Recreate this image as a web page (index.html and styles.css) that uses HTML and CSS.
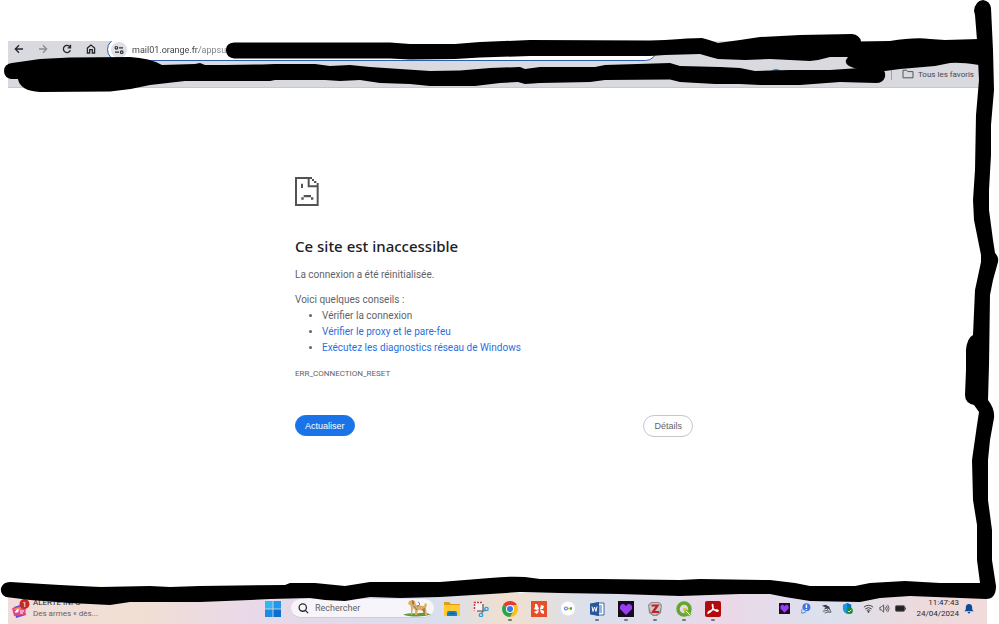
FILE: index.html
```html
<!DOCTYPE html>
<html lang="fr">
<head>
    <meta charset="UTF-8">
    <meta name="viewport" content="width=device-width, initial-scale=1.0">
    <title>mail01.orange.fr</title>
<link rel="stylesheet" href="styles.css">
</head>
<body>
    <div class="desktop">
        <header class="browser">
            <div class="toolbar">
                <nav class="nav">
                    <button class="icon-btn" aria-label="Retour"><svg viewBox="0 0 10 10"><path d="M9 5H1.5M5 1.3L1.3 5L5 8.7"/></svg></button>
                    <button class="icon-btn off" aria-label="Avancer"><svg viewBox="0 0 10 10"><path d="M1 5h7.5M5 1.3L8.7 5L5 8.7"/></svg></button>
                    <button class="icon-btn" aria-label="Recharger"><svg viewBox="0 0 10 10"><path d="M8.4 6.2A3.6 3.6 0 1 1 8 3M8.5 .8v3H5.6"/></svg></button>
                    <button class="icon-btn" aria-label="Accueil"><svg viewBox="0 0 10 10"><path d="M1.4 4L5 1.1L8.6 4v5H6.3V5.7H3.7V9H1.4z"/></svg></button>
                </nav>
                <div class="omnibox">
                    <button class="chip" aria-label="Informations du site"><svg viewBox="0 0 10 10"><circle cx="2.4" cy="2.8" r="1.3"/><path d="M5 2.8h4M1 7.2h4"/><circle cx="7.7" cy="7.2" r="1.3"/></svg></button>
                    <input class="url" type="text" aria-label="Adresse" value="mail01.orange.fr/appsu">
                </div>
            </div>
            <div class="bookmarks">
                <button class="all-bookmarks">
                    <svg viewBox="0 0 12 10"><path d="M1 1.2h3.6l1.2 1.4H11v6.2H1z"/></svg>
                    Tous les favoris
                </button>
            </div>
        </header>

        <main class="error">
            <svg class="sad" viewBox="0 0 72 87">
                <path d="M0 0h51v6h6v6h7v6h7v69H0zM6 6v75h59V31H38V6zM44 6v19h21v-7h-8v-6h-6V6z" fill-rule="evenodd"/>
                <path d="M18 20h6v13h-6zM26 54h22v7H26zM19 61h7v7h-7zM48 61h7v7h-7z"/>
            </svg>
            <h1>Ce site est inaccessible</h1>
            <p>La connexion a été réinitialisée.</p>
            <div class="tips">
                <p>Voici quelques conseils :</p>
                <ul>
                    <li>Vérifier la connexion</li>
                    <li><a href="#proxy">Vérifier le proxy et le pare-feu</a></li>
                    <li><a href="#diagnostics">Exécutez les diagnostics réseau de Windows</a></li>
                </ul>
            </div>
            <div class="code">ERR_CONNECTION_RESET</div>
            <div class="actions">
                <button class="reload">Actualiser</button>
                <button class="details">Détails</button>
            </div>
        </main>

        <footer class="taskbar">
            <div class="widget">
                <svg class="news" viewBox="0 0 18 20">
                    <path d="M2 8l9-3 3 11-10 3z" fill="#5b4be0"/>
                    <path d="M0 9l11-2 3 1-1 8-11 1z" fill="#e0468a"/>
                    <path d="M1 10l8-2-1 4z" fill="#ff8b5a"/>
                    <path d="M3 13l3-3v3zM8 12h4M8 14h3" fill="#fff" stroke="#fff"/>
                    <circle cx="12.5" cy="5" r="5" fill="#c9281f"/>
                    <text x="12.5" y="8" class="badge">1</text>
                </svg>
                <div class="headline">
                    <div class="alert">ALERTE INFO</div>
                    <div>Des armes « dès...</div>
                </div>
            </div>

            <button class="app start" aria-label="Démarrer">
                <svg viewBox="0 0 16 16"><path d="M0 0h7.6v7.6H0z" fill="#35b5f2"/><path d="M8.4 0H16v7.6H8.4z" fill="#2299e8"/><path d="M0 8.4h7.6V16H0z" fill="#1d8be0"/><path d="M8.4 8.4H16V16H8.4z" fill="#0f6fcc"/></svg>
            </button>
            <label class="search">
                <svg class="loupe" viewBox="0 0 12 12"><circle cx="5.2" cy="5" r="4"/><path d="M8 8l3 3"/></svg>
                <input type="text" placeholder="Rechercher" aria-label="Rechercher">
                <svg class="dog" viewBox="0 0 30 18">
                    <path d="M1 15.500q8-2 14-1 8-2 14 1-6 2-14 2-9 0-14-2z" fill="#5d9a3c"/>
                    <path d="M7 2l3-1 3 1 1 4 8 1 1-3 2 1-1 4 1 7h-2l-1-4-6-1-1 5h-2v-5l-2-2-1 7H9V8L8 6 6 5z" fill="#dcae63"/>
                    <path d="M10 1l2 1v4l-2-1zM20 10l2 5h1V9z" fill="#ad7935"/>
                    <path d="M12 7l3 4M16 3a2 2 0 1 1-1 4" fill="none" stroke="#5c6780" stroke-width=".8"/>
                </svg>
            </label>
            <div class="apps">
                <button class="app" aria-label="Explorateur"><svg viewBox="0 0 16 16"><path d="M0 1h5l2 2h9v6H0z" fill="#e79a14"/><path d="M0 4h16v11H0z" fill="#ffc933"/><path d="M3 15v-3q0-2 2-2h6q2 0 2 2v3z" fill="#1580c5"/><path d="M5 12h6v1H5z" fill="#075e9c"/></svg></button>
                <button class="app" aria-label="Capture"><svg viewBox="0 0 16 16"><path d="M1 1h9v9H1z" fill="#f5f0f2"/><path d="M9 1.500H1.500v8" fill="none" stroke="#cf3d32" stroke-width="1.500" stroke-dasharray="2 1"/><path d="M4 10h6l3-1M10 3v7l-1 2" fill="none" stroke="#777b82" stroke-width="1.600"/><g fill="none" stroke="#2d9bdc" stroke-width="1.300"><circle cx="13.500" cy="8" r="1.700"/><circle cx="8" cy="14" r="1.700"/></g></svg></button>
                <button class="app running" aria-label="Chrome"><svg viewBox="0 0 16 16"><path d="M8 8L1.1 4A8 8 0 0 1 14.9 4z" fill="#e53b30"/><path d="M8 8V4h6.9A8 8 0 0 1 8 16z" fill="#fbc116"/><path d="M8 8l3.5 2L8 16A8 8 0 0 1 1.1 4z" fill="#2da24c"/><circle cx="8" cy="8" r="4" fill="#fff"/><circle cx="8" cy="8" r="3" fill="#3579e8"/></svg></button>
                <button class="app" aria-label="XMind"><svg viewBox="0 0 16 16"><path d="M0 0h16v16H0z" fill="#e5502b"/><path d="M4 3h2l2 5-2 1-3-1 1-2zM10 4l3 1-1 3H9zM3 11l4-2 1 1-2 3zM9 8l4 2 0 3-3-1z" fill="#fff"/></svg></button>
                <button class="app" aria-label="Mots de passe"><svg viewBox="0 0 16 16"><circle cx="8" cy="7.5" r="7" fill="#fff"/><circle cx="6" cy="7.5" r="1.5" fill="none" stroke="#4285f4" stroke-width="1.2"/><path d="M7.5 7.5H10" stroke="#eab12b" stroke-width="1.5"/><path d="M10 7.5h2" stroke="#34a853" stroke-width="2.5"/></svg></button>
                <button class="app running" aria-label="Word"><svg viewBox="0 0 16 16"><path d="M7 2h8v12H7z" fill="#fff" stroke="#3b69a8"/><path d="M10 5h3M10 7h3M10 9h3M10 11h3" stroke="#3b69a8"/><path d="M1 2.5L10 1v14L1 13.5z" fill="#27569b"/><path d="M3 5.5l1 5 1.5-4.5L7 10.500l1-5" fill="none" stroke="#fff"/></svg></button>
                <button class="app running" aria-label="Coeur"><svg viewBox="0 0 16 16"><path d="M0 0h16v16H0z" fill="#130d1d"/><path d="M4 3h2l2 2 2-2h2l2 2v3l-6 6-6-6V5z" fill="#9b3cf5"/></svg></button>
                <button class="app running" aria-label="Zotero"><svg viewBox="0 0 16 16"><path d="M4 1h8l3 3-1 8-4 3H6l-4-3L1 4z" fill="#8f8b8c"/><path d="M4 2h8l2 3-2 7-4 2-4-2-2-7z" fill="#cbc5c5"/><path d="M4.500 4.500h6L6 11h6" fill="none" stroke="#bf222b" stroke-width="2.200"/></svg></button>
                <button class="app running" aria-label="QGIS"><svg viewBox="0 0 16 16"><circle cx="8" cy="8" r="6" fill="none" stroke="#66a52e" stroke-width="3.500"/><path d="M7 7l3 .5L15.500 13 13 15.500 8 11z" fill="#78b63a"/><path d="M7 7l4 .5L8 11z" fill="#eec646"/><path d="M10 10l4 4" stroke="#fff"/></svg></button>
                <button class="app running" aria-label="Acrobat"><svg viewBox="0 0 16 16"><rect width="16" height="16" rx="2" fill="#b30b0b"/><path d="M3 12.500C7 11 9 6 7.800 3.500 7 2.500 7 5 8 7s4 4 5 3-2-1.500-5-1-5.500 1.800-5 3z" fill="none" stroke="#fff" stroke-width="1.200"/></svg></button>
            </div>

            <div class="tray">
                <svg viewBox="0 0 12 12"><path d="M0 0h12v12H0z" fill="#170f24"/><path d="M3 2h1.500L6 3.500 7.500 2H9l1.500 1.500V6L6 10.500 1.500 6V3.500z" fill="#9b3cf5"/></svg>
                <svg viewBox="0 0 12 12"><circle cx="7" cy="4.500" r="4.300" fill="#3d74e0"/><path d="M7 1.500v4M7 6.500v1" stroke="#fff" stroke-width="1.500"/><path d="M1 7h5l1 3-4 2-2-1z" fill="#7a9cdb"/><path d="M2 8h3v2H2z" fill="#dce8fa"/></svg>
                <svg viewBox="0 0 12 12"><path d="M1 3l4-1 4 2 1 3-3-1-4 1 2-2z" fill="#3d3d42"/><path d="M9 6l2 4H7l-3 1M7 6l1 4M2 9l5-1" fill="none" stroke="#55555a"/></svg>
                <svg viewBox="0 0 12 12"><path d="M1 2l4.500-2L10 2v4q0 4-4.500 6Q1 10 1 6z" fill="#1599e5"/><path d="M5.500 0L10 2v4H5.500z" fill="#0872bc"/><circle cx="8.300" cy="8.500" r="3.500" fill="#198a37"/><path d="M6.500 8.500l1.300 1.300 2.400-2.500" fill="none" stroke="#fff"/></svg>
                <div class="status">
                    <svg viewBox="0 0 12 12"><path d="M1 4.500q5-4 10 0M2.500 6.500q3.500-3 7 0M4 8.300q2-1.800 4 0" fill="none" stroke="#333"/><circle cx="6" cy="9.500" r="1" fill="#333"/></svg>
                    <svg viewBox="0 0 12 12"><path d="M1 4.500h1.500L5 2v8L2.500 7.500H1zM6.500 4.500q1 1.500 0 3M8 3q2 3 0 6M9.500 2q3 4 0 8" fill="none" stroke="#333" stroke-width=".8"/></svg>
                    <svg viewBox="0 0 12 12"><rect x=".5" y="3" width="10" height="6" rx="1" fill="#222" stroke="#555"/><path d="M11.500 5v2" stroke="#333"/></svg>
                </div>
                <div class="clock">
                    <div>11:47:43</div>
                    <div>24/04/2024</div>
                </div>
                <svg class="bell" viewBox="0 0 10 12"><path d="M0 9l1.500-2V4.500Q2 1 5 1t3.500 3.500V7L10 9zM3.500 9.800h3Q6 11.500 5 11.500T3.500 9.800z" fill="#0b4a95"/></svg>
            </div>
        </footer>

        <!-- marker strokes drawn over the screen -->
        <svg class="marker" viewBox="0 0 999 624" preserveAspectRatio="none" aria-hidden="true">
            <path d="M771 71q5-4 10 0z" fill="#2789c4"/>
            <path d="M74 590q18-4 30-3t14 4z" fill="#e8b04a"/>
            <path d="M234 42.500L390 42.500 410 44 455 44 480 42 530 40 650 40.500 665 40 Q690 38 702 38 Q710 40 718 43 L740 40 760 37 800 35 852 34 Q860 35 861 41.500 L890 41 Q915 37 930 39 L945 40 979 39 L979 65 Q960 62 950 63 L935 66 900 69 885 71 858 69 Q844 66 846 60 L848 57 830 57 Q820 60 810 61 L770 59 745 60 718 59 Q710 57 700 54 L665 55 650 56 530 56 480 57.500 455 59 410 59.500 390 58.500 234 58.500 Q226 57 226 50.500 Q226 43 234 42.500z"/>
            <path d="M12 63L40 59 70 57.500 130 57 Q150 58 162 65 L195 64 200 63 205 65 225 65 262 64.500 275 64 315 64 330 66 350 65 370 67 400 69 430 71 460 70.500 490 68 520 67 525 69 540 67 595 67 605 65 670 63 680 66 720 67 740 68 755 71 790 70 830 70 860 68 880 67 Q886 70 885 77 Q883 83 876 83 L840 82 800 85 760 85 740 84 715 84 680 82 670 79.500 605 80 590 82 540 83 525 84 518 82 500 83 475 86 430 86 410 84 380 83 360 80 340 81 325 80 275 80 270 81 185 81 150 85 Q130 90 110 91.500 L40 92 Q20 91 18 79 L12 79 Q4 78 4 71 Q4 64 12 63z"/>
            <path d="M974 11Q975 1 983 0Q990 1 991 8L993 50 994 90 991 125 991 155 989 190 989 210 993 240 995 253 Q999 257 998 262 L993 280 990 295 989 365 988 400 Q995 409 994 418 L990 440 988 460 988 500 992 530 992 560 996 586 Q996 599 986 599 L910 596 880 598 860 602 810 601 785 597 770 594 740 594 680 596 620 594 560 593 520 592 490 594 440 597 400 598 370 597 345 601 325 600 310 598 270 599 250 600 200 602 130 602 110 605 70 603 30 600 6 597 Q0 594 1 588 Q3 582 10 582 L60 585 100 587 150 586 170 587 200 586 285 585 290 583 315 583 345 586 370 582 440 582 490 578 Q510 576 525 577 L540 579 600 579 680 580 700 579 770 580 795 583 810 586 855 586 870 583 905 581 940 583 980 583 977 560 977 525 973 500 972 460 977 425 979 412 974 405 Q965 403 965 395 L966 370 966 350 Q967 338 973 335 L975 290 981 262 981 255 977 235 974 220 973 200 975 170 976 115 979 80 977 40 975 15z"/>
        </svg>
    </div>
</body>
</html>
```
FILE: styles.css
```css
*{
    box-sizing: border-box;
}
body{
    margin: 0;
    background-color: white;
    font-family: Roboto, "Noto Sans", sans-serif;
    font-size: 10px;
}
button{
    border: none;
    background: none;
    padding: 0;
    font-family: inherit;
}
input{
    border: none;
    background: none;
    padding: 0;
    outline: none;
    min-width: 0;
    font-family: inherit;
}
svg{
    display: block;
}
.desktop{
    position: relative;
    display: flex;
    flex-direction: column;
    min-height: 100vh;
    padding-top: 41px;
}

/* browser */
.browser{
    margin: 0 19px 0 8px;
    background-color: #d9d9e0;
    border-bottom: 1px solid #c8c8cc;
}
.toolbar{
    display: flex;
    align-items: flex-end;
    gap: 11px;
    height: 20px;
    padding-left: 6px;
    overflow: hidden;
}
.nav{
    display: flex;
    gap: 14px;
    padding-bottom: 7px;
}
.icon-btn svg{
    width: 10px;
    height: 10px;
    fill: none;
    stroke: #25262a;
    stroke-width: 1.3;
}
.off svg{
    stroke: #8b8c92;
}
.omnibox{
    display: flex;
    align-items: center;
    gap: 5px;
    flex: 0 1 550px;
    height: 23px;
    padding-left: 3px;
    background-color: white;
    border: 1px solid #2d5bb0;
    border-radius: 12px;
}
.chip{
    width: 16px;
    height: 16px;
    padding: 3px;
    border-radius: 50%;
    background-color: #dedfe7;
}
.chip svg{
    fill: none;
    stroke: #2c2d31;
    stroke-width: 1.2;
}
.url{
    flex: 1;
    font-size: 9px;
    color: transparent;
    background-image: linear-gradient(90deg, #3c3d42 67px, #7b7c82 67px);
    -webkit-background-clip: text;
    background-clip: text;
}
.bookmarks{
    display: flex;
    justify-content: flex-end;
    align-items: center;
    height: 26px;
    padding-right: 6px;
}
.all-bookmarks{
    display: flex;
    align-items: center;
    gap: 4px;
    height: 12px;
    padding-left: 10px;
    border-left: 1px solid #9fa0a8;
    font-size: 8px;
    color: #46474c;
}
.all-bookmarks svg{
    width: 12px;
    height: 10px;
    fill: none;
    stroke: #55565b;
}

/* error page */
.error{
    flex: 1;
    width: 409px;
    margin: 89px auto 0;
    padding-right: 11px;
    color: #5f6368;
    line-height: 16px;
}
.sad{
    width: 24px;
    height: 29px;
    fill: #535353;
}
h1{
    margin: 30px 0 11px;
    font-family: "Noto Sans", sans-serif;
    font-size: 15px;
    font-weight: 500;
    line-height: 20px;
    color: #202124;
}
p{
    margin: 0;
}
.tips{
    margin-top: 9px;
}
ul{
    margin: 0;
    padding-left: 27px;
}
a{
    color: #2a6fe0;
    text-decoration: none;
}
.code{
    margin-top: 10px;
    font-size: 8px;
}
.actions{
    display: flex;
    justify-content: space-between;
    margin-top: 33px;
}
.actions button{
    height: 22px;
    padding: 0 10px;
    border: 1px solid #c4c6ca;
    border-radius: 11px;
    font-family: "Liberation Sans", Arial, sans-serif;
    font-size: 9px;
    color: #5f6368;
}
.actions .reload{
    height: 21px;
    padding: 0 9px;
    border-color: #1a73e8;
    background-color: #1a73e8;
    color: white;
}

/* taskbar */
.taskbar{
    display: flex;
    align-items: center;
    height: 31px;
    margin: 0 12px 0 8px;
    padding-right: 13px;
    background: linear-gradient(90deg, #f2dcdb 0%, #f1dfd2 13%, #ead9e8 24%, #e2d9ea 32%, #d9dfed 44%, #f1dfce 51%, #dbe0ec 59%, #e2dcea 69%, #ecd8e7 73%, #dbe1ee 84%, #ecdadd 93%, #f1dbdb 100%);
}
.widget{
    display: flex;
    align-items: center;
    gap: 3px;
    flex: 0 0 257px;
    padding-left: 4px;
    font-size: 8px;
    line-height: 11px;
    color: #66615f;
}
.news{
    width: 18px;
    height: 20px;
}
.badge{
    font-size: 8px;
    fill: white;
    text-anchor: middle;
}
.headline, .clock{
    padding-bottom: 1px;
}
.alert{
    color: #2b2928;
}
.app{
    position: relative;
    width: 16px;
    height: 16px;
}
.running::after{
    content: "";
    position: absolute;
    left: 6px;
    bottom: -4px;
    width: 4px;
    height: 2px;
    border-radius: 1px;
    background-color: #77757c;
}
.search{
    display: flex;
    align-items: center;
    gap: 6px;
    width: 143px;
    height: 19px;
    margin: 0 10px;
    padding: 0 2px 0 7px;
    border-radius: 10px;
    background-color: #f8f5fa;
    border-bottom: 1px solid #cfccd6;
}
.search input{
    flex: 1;
    font-size: 9px;
}
.search input::placeholder{
    color: #605f65;
}
.loupe{
    width: 11px;
    height: 11px;
    fill: none;
    stroke: #29292d;
    stroke-width: 1.4;
}
.dog{
    width: 30px;
    height: 18px;
}
.apps{
    display: flex;
    gap: 13px;
}
.tray{
    display: flex;
    align-items: center;
    gap: 10px;
    margin-left: auto;
}
.tray svg{
    width: 11px;
    height: 11px;
}
.status{
    display: flex;
    gap: 5px;
}
.clock{
    font-size: 8px;
    line-height: 11px;
    text-align: right;
    color: #2b2a2d;
}
.tray .bell{
    width: 10px;
    margin-left: -5px;
}

.marker{
    position: absolute;
    top: 0;
    left: 0;
    width: 100%;
    height: 100%;
    pointer-events: none;
}
```
